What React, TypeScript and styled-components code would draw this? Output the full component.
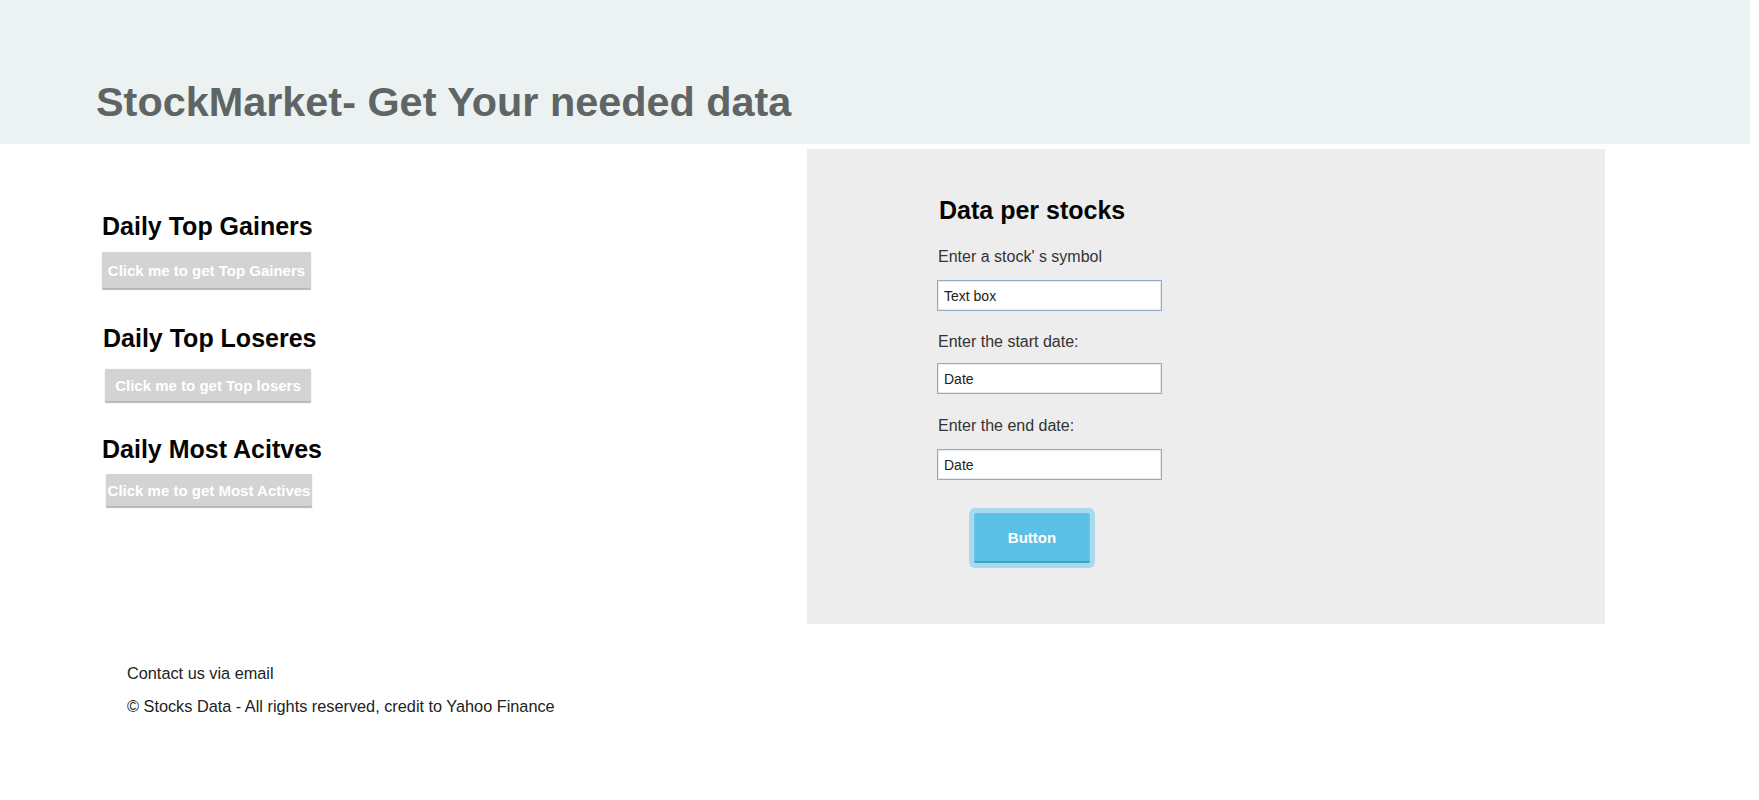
import React from "react";
import styled, { createGlobalStyle } from "styled-components";

const GlobalStyle = createGlobalStyle`
  html, body {
    margin: 0;
    padding: 0;
    background: #ffffff;
    font-family: "Liberation Sans", Arial, Helvetica, sans-serif;
  }
  * { box-sizing: border-box; }
`;

const Page = styled.div`
  width: 1759px;
  min-height: 800px;
  background: #ffffff;
`;

const Header = styled.header`
  width: 1750px;
  height: 144px;
  background: #ecf1f1;
  padding: 78px 0 0 96px;
`;

const Title = styled.h1`
  margin: 0;
  font-size: 41.4px;
  line-height: 48px;
  font-weight: 700;
  color: #5f6565;
  letter-spacing: 0;
`;

const Main = styled.main`
  display: flex;
  align-items: flex-start;
  margin-top: 5px;
`;

const LeftColumn = styled.section`
  width: 807px;
  display: flex;
  flex-direction: column;
  align-items: flex-start;
  padding-top: 63px;
`;

const Block = styled.div<{ $top: number }>`
  display: flex;
  flex-direction: column;
  align-items: flex-start;
  margin-top: ${(p) => p.$top}px;
`;

const SectionTitle = styled.h2<{ $indent: number }>`
  margin: 0 0 0 ${(p) => p.$indent}px;
  font-size: 25px;
  line-height: 28px;
  font-weight: 700;
  color: #050505;
  white-space: nowrap;
`;

const GreyButton = styled.button<{ $indent: number; $gap: number; $h: number; $w: number }>`
  margin: ${(p) => p.$gap}px 0 0 ${(p) => p.$indent}px;
  width: ${(p) => p.$w}px;
  height: ${(p) => p.$h}px;
  padding: 0;
  border: none;
  border-radius: 1px;
  background: #d3d3d3;
  color: #ffffff;
  font-family: "Liberation Sans", Arial, sans-serif;
  font-size: 15px;
  font-weight: 700;
  white-space: nowrap;
  overflow: visible;
  box-shadow: 0 2px 1px rgba(0, 0, 0, 0.28), 0 0 1px rgba(0, 0, 0, 0.12);
  cursor: pointer;
`;

const Panel = styled.section`
  width: 798px;
  background: #ededed;
  padding: 47px 0 61px 132px;
  display: flex;
  flex-direction: column;
  align-items: flex-start;
`;

const PanelTitle = styled.h2`
  margin: 0;
  font-size: 25px;
  line-height: 28px;
  font-weight: 700;
  color: #050505;
`;

const Label = styled.label<{ $top: number }>`
  display: block;
  margin: ${(p) => p.$top}px 0 0 -1px;
  font-size: 16px;
  line-height: 18px;
  color: #333333;
`;

const Field = styled.input<{ $top: number }>`
  display: block;
  margin: ${(p) => p.$top}px 0 0 -2px;
  width: 225px;
  height: 31px;
  padding: 0 6px;
  border: 1px solid #96abc3;
  box-shadow: inset 0 0 0 1px #e4ebf2;
  background: #ffffff;
  font-family: "Liberation Sans", Arial, sans-serif;
  font-size: 14px;
  color: #222222;
  outline: none;
  &::placeholder {
    color: #222222;
    opacity: 1;
  }
`;

const BlueButton = styled.button`
  margin: 33px 0 0 35px;
  width: 116px;
  height: 50px;
  border: none;
  border-bottom: 2px solid #3f9fc5;
  border-radius: 2px;
  background: #5bc0e6;
  color: #ffffff;
  font-family: "Liberation Sans", Arial, sans-serif;
  font-size: 15px;
  font-weight: 700;
  box-shadow: 0 0 0 5px #a8d9ec, inset 1px 0 0 rgba(255, 255, 255, 0.12), inset -1px 0 0 rgba(255, 255, 255, 0.12);
  cursor: pointer;
`;

const Footer = styled.footer`
  padding: 40px 0 0 127px;
  display: flex;
  flex-direction: column;
  gap: 15px;
`;

const FooterLine = styled.p`
  margin: 0;
  font-size: 16.3px;
  line-height: 18px;
  color: #222222;
`;

const sections = [
  { title: "Daily Top Gainers", button: "Click me to get Top Gainers", top: 0, tIndent: 102, bIndent: 102, gap: 12, h: 36, w: 209 },
  { title: "Daily Top Loseres", button: "Click me to get Top losers", top: 36, tIndent: 103, bIndent: 105, gap: 17, h: 32, w: 206 },
  { title: "Daily Most Acitves", button: "Click me to get Most Actives", top: 34, tIndent: 102, bIndent: 106, gap: 11, h: 32, w: 206 },
];

export default function App() {
  return (
    <Page>
      <GlobalStyle />
      <Header>
        <Title>StockMarket- Get Your needed data</Title>
      </Header>
      <Main>
        <LeftColumn>
          {sections.map((s) => (
            <Block key={s.title} $top={s.top}>
              <SectionTitle $indent={s.tIndent}>{s.title}</SectionTitle>
              <GreyButton $indent={s.bIndent} $gap={s.gap} $h={s.h} $w={s.w}>
                {s.button}
              </GreyButton>
            </Block>
          ))}
        </LeftColumn>
        <Panel>
          <PanelTitle>Data per stocks</PanelTitle>
          <Label $top={24}>Enter a stock' s symbol</Label>
          <Field $top={14} placeholder="Text box" />
          <Label $top={22}>Enter the start date:</Label>
          <Field $top={12} placeholder="Date" />
          <Label $top={23}>Enter the end date:</Label>
          <Field $top={14} placeholder="Date" />
          <BlueButton>Button</BlueButton>
        </Panel>
      </Main>
      <Footer>
        <FooterLine>Contact us via email</FooterLine>
        <FooterLine>© Stocks Data - All rights reserved, credit to Yahoo Finance</FooterLine>
      </Footer>
    </Page>
  );
}
